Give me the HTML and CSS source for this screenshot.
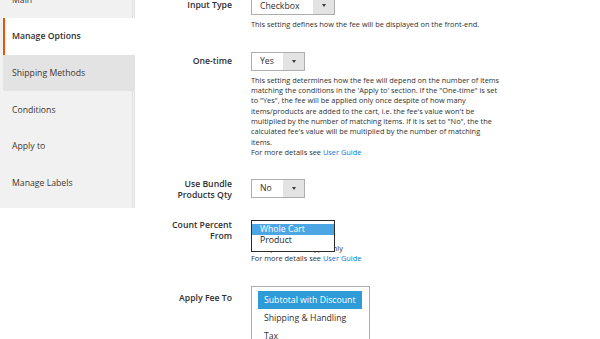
FILE: index.html
```html
<!DOCTYPE html>
<html lang="en">
<head>
<meta charset="utf-8">
<title>Manage Options</title>
<link rel="stylesheet" href="styles.css">
</head>
<body>
<div class="page">
  <aside class="tabs">
    <div class="tab">Main</div>
    <div class="tab active">Manage Options</div>
    <div class="tab hover">Shipping Methods</div>
    <div class="tab">Conditions</div>
    <div class="tab">Apply to</div>
    <div class="tab">Manage Labels</div>
  </aside>
  <main class="form">
    <div class="field f-input">
      <div class="label">Input Type</div>
      <div class="control">
        <div class="select w-wide"><span class="value">Checkbox</span><span class="arrow"></span></div>
        <div class="note">This setting defines how the fee will be displayed on the front-end.</div>
      </div>
    </div>
    <div class="field f-onetime">
      <div class="label">One-time</div>
      <div class="control">
        <div class="select w-narrow"><span class="value">Yes</span><span class="arrow"></span></div>
        <div class="note">This setting determines how the fee will depend on the number of items<br>matching the conditions in the 'Apply to' section. If the "One-time" is set<br>to "Yes", the fee will be applied only once despite of how many<br>items/products are added to the cart, i.e. the fee's value won't be<br>multiplied by the number of matching items. If it is set to "No", the the<br>calculated fee's value will be multiplied by the number of matching<br>items.<br>For more details see <a class="link">User Guide</a></div>
      </div>
    </div>
    <div class="field f-bundle">
      <div class="label multi">Use Bundle<br>Products Qty</div>
      <div class="control">
        <div class="select w-narrow"><span class="value">No</span><span class="arrow"></span></div>
      </div>
    </div>
    <div class="field f-percent">
      <div class="label multi">Count Percent<br>From</div>
      <div class="control">
        <div class="select w-wide"><span class="value">Whole Cart</span><span class="arrow"></span></div>
        <div class="note">For a percent fee type only<br>For more details see <a class="link">User Guide</a></div>
        <ul class="popup">
          <li class="opt sel">Whole Cart</li>
          <li class="opt">Product</li>
        </ul>
      </div>
    </div>
    <div class="field f-apply">
      <div class="label low">Apply Fee To</div>
      <div class="control">
        <ul class="multiselect">
          <li class="mopt sel">Subtotal with Discount</li>
          <li class="mopt">Shipping &amp; Handling</li>
          <li class="mopt">Tax</li>
        </ul>
      </div>
    </div>
  </main>
</div>
</body>
</html>
```

FILE: styles.css
```css
html, body {
  margin: 0;
  padding: 0;
  background: #ffffff;
  overflow: hidden;
}

body {
  width: 600px;
  height: 339px;
  font-family: "Open Sans", "Noto Sans", sans-serif;
  color: #303030;
}

.page {
  display: flex;
  align-items: flex-start;
  margin-top: -18.7px;
}

/* ---------- sidebar tabs ---------- */
.tabs {
  width: 132px;
  flex: none;
  background: #f1f1f1;
  border-right: 3px double #e0e0e0;
  padding-bottom: 7px;
}

.tab {
  height: 36.7px;
  margin-left: 3px;
  display: flex;
  align-items: center;
  padding-left: 9px;
  font-size: 8.7px;
  color: #41362f;
  box-sizing: border-box;
}

.tab.active {
  background: #ffffff;
  border-left: 2px solid #eb5202;
  padding-left: 7px;
  margin-right: -3px;
  font-weight: 600;
  color: #303030;
}

.tab.hover {
  background: #e3e3e3;
  margin-right: -3px;
}

/* ---------- form ---------- */
.form {
  flex: 1;
  display: flex;
  flex-direction: column;
  padding-top: 14.7px;
}

.field {
  display: grid;
  grid-template-columns: 97px 1fr;
  column-gap: 19px;
}

.f-input { margin-bottom: 22.5px; }
.f-onetime { margin-bottom: 21.6px; }
.f-bundle { margin-bottom: 19px; }
.f-percent { margin-bottom: 22.4px; }

.label {
  text-align: right;
  font-size: 8.7px;
  font-weight: 600;
  line-height: 11px;
  padding-top: 4px;
  color: #303030;
}

.label.multi {
  padding-top: 0;
}

.label.low {
  padding-top: 7px;
}

.control {
  position: relative;
}

.select {
  display: flex;
  height: 19px;
  box-sizing: border-box;
  border: 1px solid #adadad;
  background: #ffffff;
  font-size: 8.7px;
}

.w-wide { width: 84px; }
.w-narrow { width: 54px; }

.select .value {
  flex: 1;
  display: flex;
  align-items: center;
  padding-left: 8px;
  color: #303030;
}

.select .arrow {
  width: 21px;
  flex: none;
  background: #e3e3e3;
  display: flex;
  align-items: center;
  justify-content: center;
}

.select .arrow::after {
  content: "";
  width: 0;
  height: 0;
  border-left: 2.5px solid transparent;
  border-right: 2.5px solid transparent;
  border-top: 3px solid #41362f;
}

.note {
  margin-top: 4px;
  font-size: 7.4px;
  line-height: 10.3px;
  color: #303030;
  white-space: nowrap;
}

.link {
  color: #007bdb;
  text-decoration: none;
}

/* open native dropdown list */
.popup {
  position: absolute;
  top: 0;
  left: 0;
  width: 84px;
  box-sizing: border-box;
  margin: 0;
  padding: 3px 0 4px;
  list-style: none;
  background: #ffffff;
  border: 1px solid #2b2b2b;
}

.opt {
  height: 11.5px;
  line-height: 11.5px;
  padding-left: 8px;
  font-size: 8.7px;
  color: #1a1a1a;
}

.opt.sel {
  background: #4da6e4;
  color: #ffffff;
}

/* multi select */
.multiselect {
  width: 119px;
  height: 70px;
  box-sizing: border-box;
  margin: 0;
  padding: 4px 7px 0 6px;
  list-style: none;
  border: 1px solid #adadad;
  background: #ffffff;
}

.mopt {
  height: 18px;
  line-height: 18px;
  padding-left: 6px;
  font-size: 8.7px;
  color: #303030;
  white-space: nowrap;
}

.mopt.sel {
  background: #2f9bd9;
  color: #ffffff;
}
```
